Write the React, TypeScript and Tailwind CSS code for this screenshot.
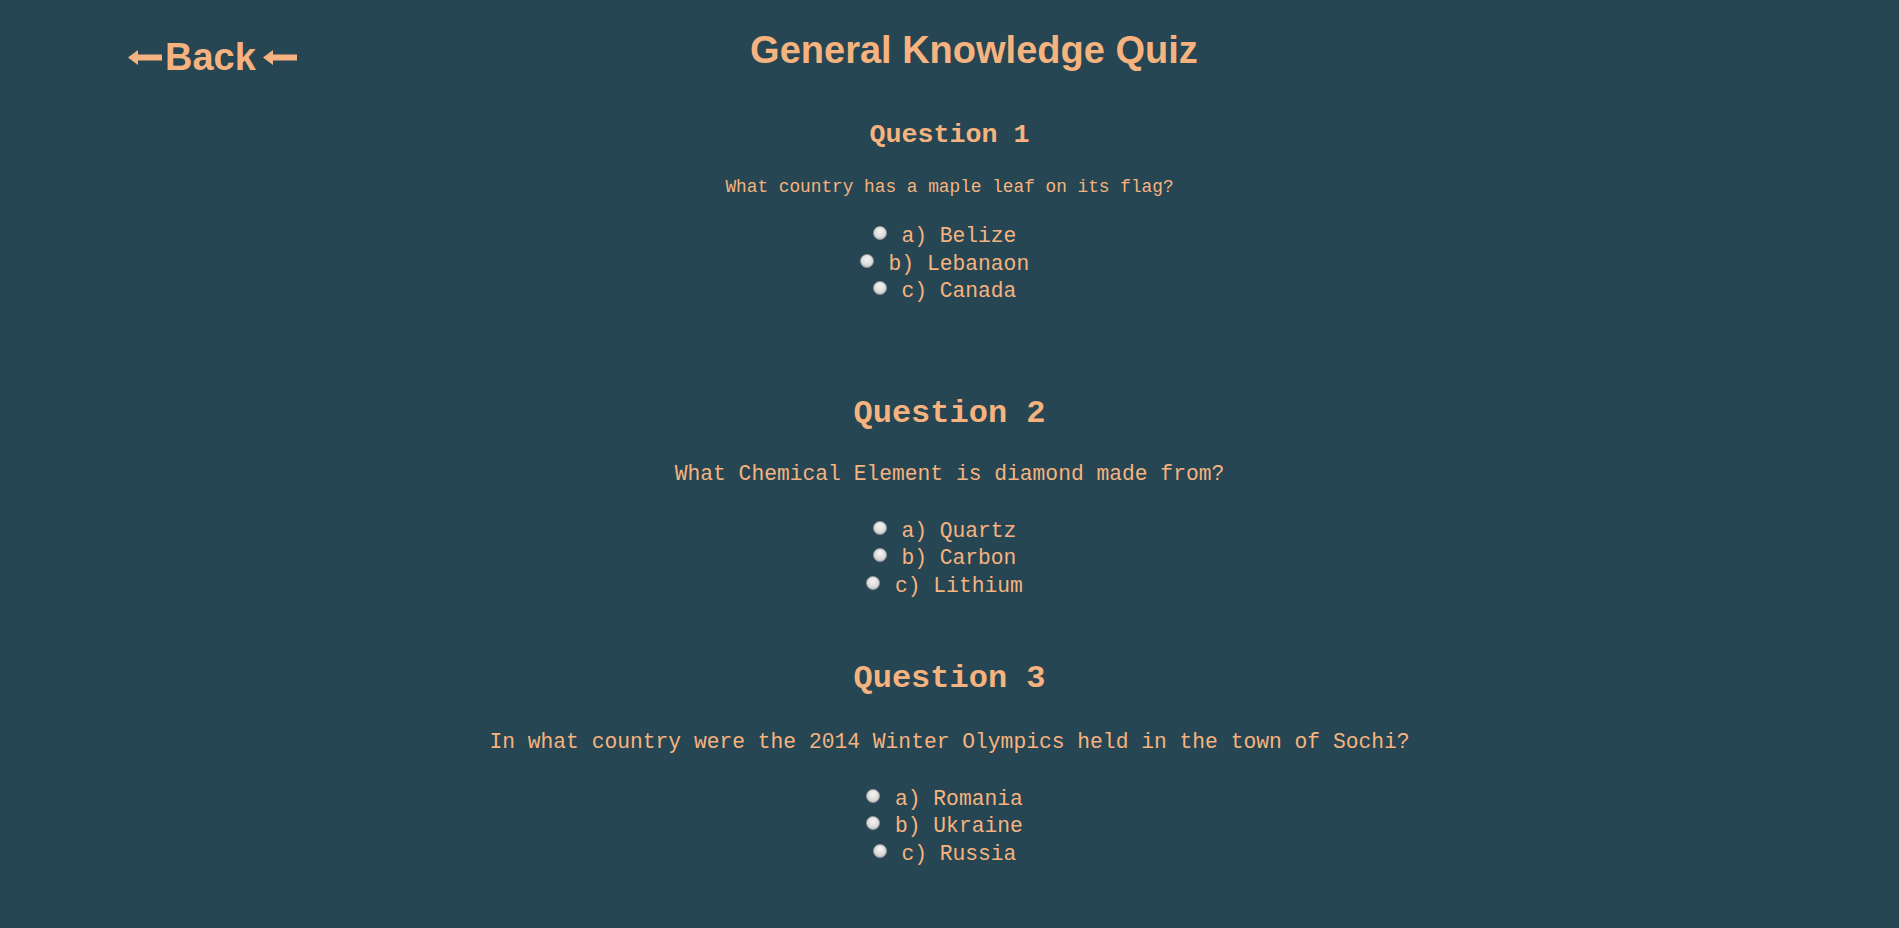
import React from 'react';

type Question = {
  id: number;
  title: string;
  text: string;
  options: string[];
};

const questions: Question[] = [
  { id: 1, title: 'Question 1', text: 'What country has a maple leaf on its flag?', options: ['a) Belize', 'b) Lebanaon', 'c) Canada'] },
  { id: 2, title: 'Question 2', text: 'What Chemical Element is diamond made from?', options: ['a) Quartz', 'b) Carbon', 'c) Lithium'] },
  { id: 3, title: 'Question 3', text: 'In what country were the 2014 Winter Olympics held in the town of Sochi?', options: ['a) Romania', 'b) Ukraine', 'c) Russia'] },
];

const mono = { fontFamily: '"Liberation Mono", "DejaVu Sans Mono", monospace' };
const sans = { fontFamily: '"Liberation Sans", Arial, sans-serif' };

const Arrow: React.FC<{ className?: string }> = ({ className }) => (
  <svg width="34" height="15" viewBox="0 0 34 15" className={className} fill="currentColor">
    <polygon points="0,7.5 10,0 10,15" />
    <rect x="9" y="4.5" width="25" height="6" />
  </svg>
);

const Options: React.FC<{ q: Question; className: string }> = ({ q, className }) => {
  const [picked, setPicked] = React.useState<string | null>(null);
  return (
    <div className={className}>
      {q.options.map(opt => (
        <label key={opt} className="block text-center text-[21.3px] leading-[27.6px] pr-[14px] cursor-pointer">
          <input
            type="radio"
            name={`q${q.id}`}
            checked={picked === opt}
            onChange={() => setPicked(opt)}
            className="appearance-none inline-block align-baseline w-[14px] h-[14px] ml-[4px] mr-[2px] mb-[2px] rounded-full border border-[#9c9c9c] bg-[radial-gradient(circle_at_50%_35%,#f4f4f4,#dcdcdc_55%,#b0b0b0)] checked:bg-[radial-gradient(circle_at_50%_35%,#cfe3ff,#4a8ce8)] cursor-pointer"
          />{' '}
          {opt}
        </label>
      ))}
    </div>
  );
};

export default function App() {
  const [q1, q2, q3] = questions;

  return (
    <div className="min-h-screen bg-[#264653] text-[#f6b37f] pt-[27px]">
      {/* Header */}
      <div className="flex items-start h-[46px]">
        <a
          href="#"
          className="ml-[128px] mt-[7px] flex items-center text-[38px] leading-[46px] font-bold whitespace-nowrap"
          style={sans}
        >
          <Arrow className="mr-[3px]" />
          Back
          <Arrow className="ml-[7px]" />
        </a>
        <h1 className="flex-1 text-center text-[38px] leading-[46px] font-bold" style={sans}>
          General Knowledge Quiz
        </h1>
        <div className="w-[248px] shrink-0" />
      </div>

      <div style={mono}>
        {/* Question 1 */}
        <h3 className="mt-[46px] text-center text-[26.7px] leading-[32px] font-bold">{q1.title}</h3>
        <p className="mt-[25px] text-center text-[17.8px] leading-[22px]">{q1.text}</p>
        <Options q={q1} className="mt-[25px]" />

        {/* Question 2 */}
        <h2 className="mt-[89px] text-center text-[32px] leading-[38px] font-bold">{q2.title}</h2>
        <p className="mt-[28px] text-center text-[21.3px] leading-[26px]">{q2.text}</p>
        <Options q={q2} className="mt-[31px]" />

        {/* Question 3 */}
        <h2 className="mt-[59px] text-center text-[32px] leading-[38px] font-bold">{q3.title}</h2>
        <p className="mt-[31px] text-center text-[21.3px] leading-[26px]">{q3.text}</p>
        <Options q={q3} className="mt-[31px] pb-[40px]" />
      </div>
    </div>
  );
}
